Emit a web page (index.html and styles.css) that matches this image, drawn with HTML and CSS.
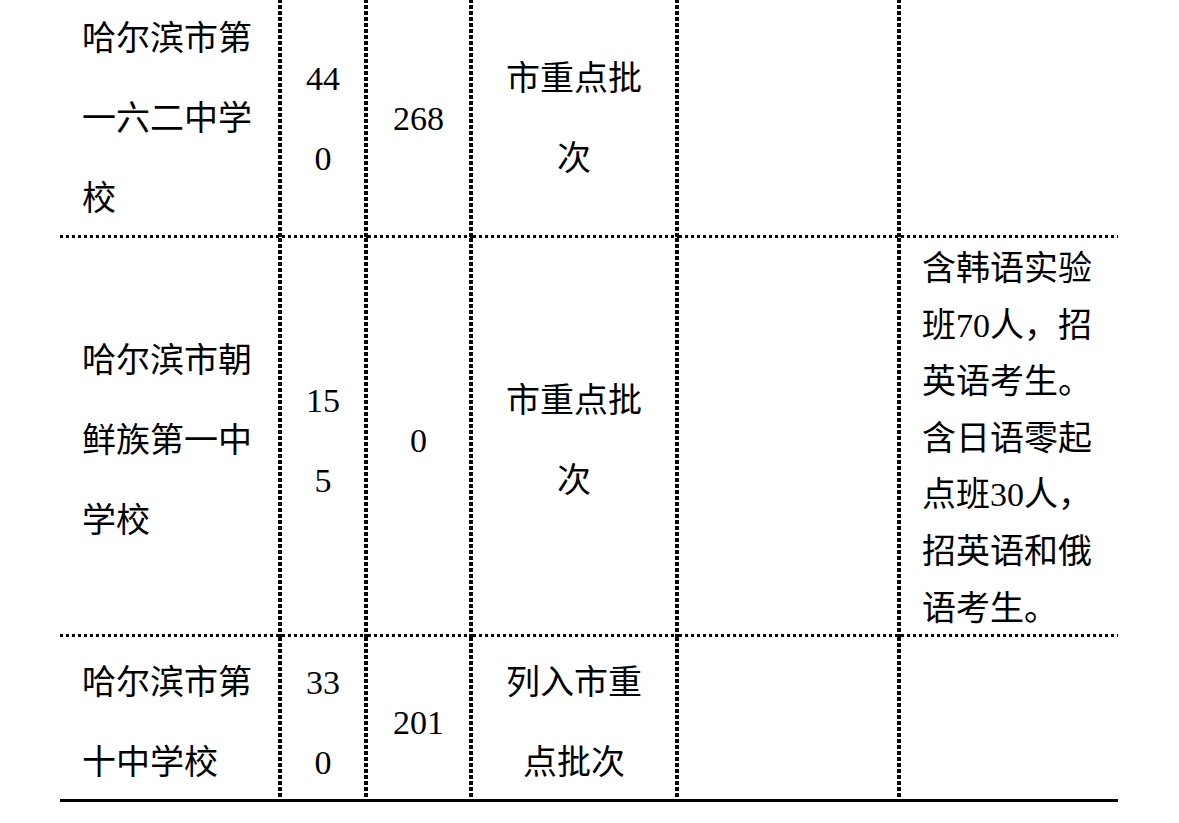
FILE: index.html
```html
<!DOCTYPE html>
<html lang="zh-CN">
<head>
<meta charset="utf-8">
<title>招生计划</title>
<link rel="stylesheet" href="styles.css">
</head>
<body>
<div class="page">
<table class="tbl">
<colgroup>
<col class="c1"><col class="c2"><col class="c3"><col class="c4"><col class="c5"><col class="c6">
</colgroup>
<tbody>
<tr>
<td class="name">哈尔滨市第一六二中学校</td>
<td class="num"><span class="lat">440</span></td>
<td class="num"><span class="lat">268</span></td>
<td class="batch">市重点批次</td>
<td class="empty"></td>
<td class="note"></td>
</tr>
<tr>
<td class="name">哈尔滨市朝鲜族第一中学校</td>
<td class="num"><span class="lat">155</span></td>
<td class="num"><span class="lat">0</span></td>
<td class="batch">市重点批次</td>
<td class="empty"></td>
<td class="note">含韩语实验班70人，招英语考生。含日语零起点班30人，招英语和俄语考生。</td>
</tr>
<tr>
<td class="name">哈尔滨市第十中学校</td>
<td class="num"><span class="lat">330</span></td>
<td class="num"><span class="lat">201</span></td>
<td class="batch">列入市重点批次</td>
<td class="empty"></td>
<td class="note"></td>
</tr>
</tbody>
</table>
</div>
</body>
</html>
```

FILE: styles.css
```css
html, body {
  margin: 0;
  padding: 0;
  background: #ffffff;
}
body {
  font-family: "Noto Sans CJK SC", "Liberation Serif", sans-serif;
  font-size: 34px;
  color: #000000;
}
.lat {
  font-family: "Liberation Serif", "Noto Sans CJK SC", serif;
  line-height: 1;
}
.page {
  padding: 0 61px 0 60px;
  margin-top: -7px;
}
.tbl {
  border-collapse: collapse;
  border-spacing: 0;
  table-layout: fixed;
  width: 1058px;
}
.c1 { width: 222px; }
.c2 { width: 86px; }
.c3 { width: 105px; }
.c4 { width: 206px; }
.c5 { width: 222px; }
.c6 { width: 217px; }

/* dotted rules drawn as cell backgrounds: vertical on the right, horizontal at the bottom */
.tbl td {
  border: none;
  padding: 3px 22px 2px 18px;
  line-height: 80px;
  vertical-align: middle;
  word-break: break-all;
  text-align: center;
  background-image:
    repeating-linear-gradient(to bottom, #000 0 4px, transparent 4px 6px),
    repeating-linear-gradient(to right, #000 0 3px, transparent 3px 6px);
  background-position: right top, left bottom;
  background-size: 4px 100%, 100% 3px;
  background-repeat: no-repeat, no-repeat;
}
.tbl td:last-child {
  background-image: repeating-linear-gradient(to right, #000 0 3px, transparent 3px 6px);
  background-position: left bottom;
  background-size: 100% 3px;
}
.tbl tr:last-child td {
  background-image:
    repeating-linear-gradient(to bottom, #000 0 4px, transparent 4px 6px),
    linear-gradient(#000, #000);
  background-size: 4px calc(100% - 3px), 100% 3px;
}
.tbl tr:last-child td:last-child {
  background-image: linear-gradient(#000, #000);
  background-position: left bottom;
  background-size: 100% 3px;
}
.tbl td.name {
  text-align: left;
  padding-left: 22px;
  padding-right: 26px;
}
.tbl td.num {
  padding-left: 16px;
  padding-right: 20px;
}
.tbl td.note {
  font-family: "Liberation Serif", "Noto Sans CJK SC", serif;
  text-align: left;
  padding: 3px 10px 0 21px;
  line-height: 56.6px;
}
```
